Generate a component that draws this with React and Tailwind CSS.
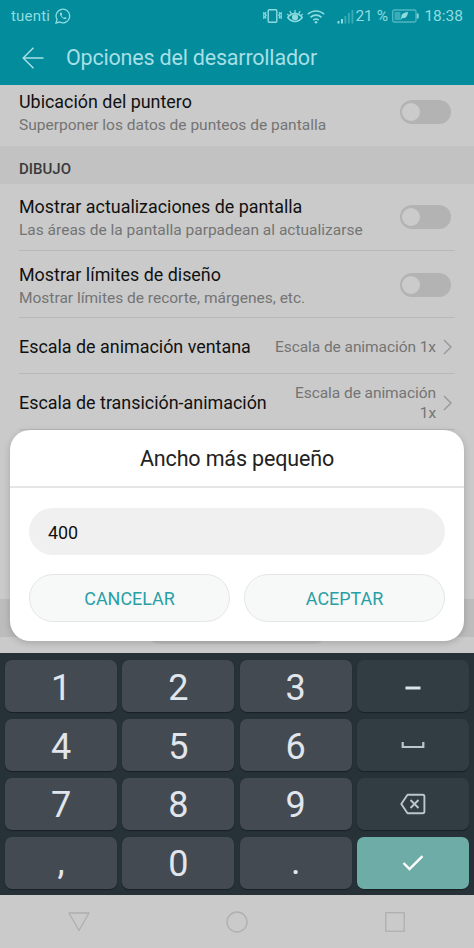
import React, { useState } from "react";

const keys = ["1", "2", "3", "minus", "4", "5", "6", "space", "7", "8", "9", "delete", ",", "0", ".", "ok"];

function StatusBar() {
  return (
    <div className="flex h-[32px] items-center justify-between pl-[11px] pr-[11px] text-[#8fdce0]">
      <div className="flex items-center">
        <span className="text-[15px] leading-[18px] tracking-[0.2px]">tuenti</span>
        <svg className="ml-[5px]" width="16" height="16" viewBox="0 0 16 16" fill="none" stroke="currentColor" strokeWidth="1.3">
          <path d="M1 15l1-3.600A6.800 6.800 0 1 1 4.700 14z" />
          <path d="M5.600 4.400c-1 .6-.9 2 .1 3.500 1.100 1.600 2.500 2.800 3.900 3.200 1.200.3 2-.6 1.900-1.300L9.900 9l-.9.900C7.800 9.300 7 8.400 6.500 7.400l.7-.9-.7-1.900z" fill="currentColor" stroke="none" />
        </svg>
      </div>
      <div className="flex items-center">
        <svg width="19" height="16" viewBox="0 0 19 16" fill="none" stroke="currentColor" strokeWidth="1.400">
          <rect x="5.200" y="1.700" width="8.600" height="12.600" rx="1" />
          <path d="M3.200 4l-1.200 1.500 1.200 1.700L2 8.900l1.200 1.600M.8 4v7M15.800 4L17 5.500l-1.200 1.700L17 8.900l-1.200 1.600M18.200 4v7" strokeWidth="1.200" />
        </svg>
        <svg className="ml-[5px]" width="16" height="16" viewBox="0 0 16 16" fill="none" stroke="currentColor" strokeWidth="1.500">
          <path d="M.8 9.500C3 6.700 5.300 5.600 8 5.600s5 1.100 7.200 3.900C13 12.300 10.700 13.500 8 13.500S3 12.300.8 9.500z" />
          <circle cx="8" cy="9.300" r="2.300" fill="currentColor" />
          <path d="M8 5V2M4.300 5.600L2.800 3.100M11.700 5.600l1.500-2.500M1.800 7.700L.4 6M14.200 7.700L15.600 6" strokeWidth="1.200" />
        </svg>
        <svg className="ml-[4px]" width="18" height="15" viewBox="0 0 18 15" fill="none" stroke="currentColor" strokeWidth="1.600">
          <path d="M.8 5.300a11.700 11.700 0 0 1 16.400 0M3.500 8.300a8 8 0 0 1 11 0M6.300 11.100a4.200 4.200 0 0 1 5.400 0" />
          <circle cx="9" cy="13.300" r="1.300" fill="currentColor" stroke="none" />
        </svg>
        <svg className="ml-[12px]" width="17" height="15" viewBox="0 0 17 15" fill="currentColor">
          <rect x="0.500" y="12" width="2" height="2.500" />
          <rect x="4" y="10" width="2" height="4.500" />
          <g opacity="0.4">
            <rect x="7.500" y="7" width="1.800" height="7.500" />
            <rect x="11" y="4" width="1.800" height="10.500" />
            <rect x="14.500" y="1" width="1.800" height="13.500" />
          </g>
        </svg>
        <span className="ml-px w-[33px] whitespace-nowrap text-[15.500px] leading-[18px]">21 %</span>
        <svg className="ml-[4px]" width="27" height="14" viewBox="0 0 27 14" fill="none" stroke="currentColor">
          <rect x="0.700" y="1" width="23.300" height="12" rx="1.500" opacity="0.550" strokeWidth="1.300" />
          <rect x="2.500" y="3" width="6" height="8" fill="currentColor" stroke="none" opacity="0.400" />
          <path d="M25.700 4.500v5" strokeWidth="1.800" />
          <path d="M16 3c-4 .3-7 2-6.500 5l-1.200 2.500 1-.2L10.500 9c3 .8 5.300-2 5.500-6z" fill="currentColor" stroke="none" />
        </svg>
        <span className="ml-[5px] text-[15.500px] leading-[18px]">18:38</span>
      </div>
    </div>
  );
}

function Header() {
  return (
    <header className="h-[85px] shrink-0 bg-[#028c9c]">
      <StatusBar />
      <div className="flex h-[51px] items-center pl-[22px] text-[#a6dfe5]">
        <svg width="22" height="22" viewBox="0 0 22 22" fill="none" stroke="currentColor" strokeWidth="1.500">
          <path d="M21.500 11H1.300M11.500.7L1.200 11l10.300 10.300" />
        </svg>
        <h1 className="ml-[22px] pt-px text-[21.500px] leading-[26px] tracking-[-0.200px]">Opciones del desarrollador</h1>
      </div>
    </header>
  );
}

function Toggle() {
  const [on, setOn] = useState(false);
  return (
    <button
      onClick={() => setOn(!on)}
      className={"flex h-[24px] w-[51px] shrink-0 items-center rounded-full bg-[#b3b3b3] px-[2px] " + (on ? "justify-end" : "justify-start")}
    >
      <span className="h-[18px] w-[18px] rounded-full bg-[#cbcbcb]" />
    </button>
  );
}

function ToggleRow({ title, text }) {
  return (
    <div className="flex h-full items-center justify-between pr-[4px]">
      <div className="whitespace-nowrap pt-[2px]">
        <p className="text-[17.900px] leading-[24px] text-[#111]">{title}</p>
        <p className="text-[15.500px] leading-[22px] text-[#747474]">{text}</p>
      </div>
      <Toggle />
    </div>
  );
}

function ValueRow({ title, children }) {
  return (
    <div className="flex h-full items-center pt-[2px]">
      <p className="whitespace-nowrap pt-px text-[17.900px] leading-[24px] text-[#111]">{title}</p>
      <p className="ml-auto whitespace-nowrap text-right text-[15.500px] leading-[20px] tracking-[-0.070px] text-[#747474]">{children}</p>
      <svg className="ml-[7px] mr-[3px]" width="9" height="16" viewBox="0 0 9 16" fill="none" stroke="#9b9b9b" strokeWidth="1.500">
        <path d="M1 1l7 7-7 7" />
      </svg>
    </div>
  );
}

function Settings() {
  return (
    <main className="h-[568px] shrink-0 overflow-hidden bg-[#cacaca]">
      <div className="h-[61px] pl-[19px] pr-[19px] pb-[7px]">
        <ToggleRow title="Ubicación del puntero" text="Superponer los datos de punteos de pantalla" />
      </div>
      <div className="flex h-[38px] items-center bg-[#c2c2c2] pl-[19px] pt-[9px]">
        <h2 className="text-[15px] font-medium text-[#3a3a3a]">DIBUJO</h2>
      </div>
      <div className="mx-[19px] h-[67px] border-b border-[#b8b8b8]">
        <ToggleRow title="Mostrar actualizaciones de pantalla" text="Las áreas de la pantalla parpadean al actualizarse" />
      </div>
      <div className="mx-[19px] h-[67px] border-b border-[#b8b8b8] pt-[2px]">
        <ToggleRow title="Mostrar límites de diseño" text="Mostrar límites de recorte, márgenes, etc." />
      </div>
      <div className="mx-[19px] h-[56px] border-b border-[#b8b8b8]">
        <ValueRow title="Escala de animación ventana">Escala de animación 1x</ValueRow>
      </div>
      <div className="mx-[19px] h-[56px] border-b border-[#b8b8b8]">
        <ValueRow title="Escala de transición-animación">
          Escala de animación
          <br />
          1x
        </ValueRow>
      </div>
      <div className="h-[169px]" />
      <div className="h-[38px] bg-[#bcbcbc]" />
    </main>
  );
}

function Dialog() {
  const [value, setValue] = useState("400");
  return (
    <div className="absolute left-[10px] top-[430px] h-[211px] w-[454px] rounded-[20px] bg-white shadow-[0_2px_7px_rgba(0,0,0,0.18)]">
      <h2 className="flex h-[58px] items-center justify-center border-b-2 border-[#e5e5e5] pt-[3px] text-[21.500px] tracking-[-0.150px] text-[#222]">
        Ancho más pequeño
      </h2>
      <div className="px-[19px] pt-[20px]">
        <input
          value={value}
          onChange={(e) => setValue(e.target.value)}
          className="block h-[47px] w-full rounded-full bg-[#f0f0f0] px-[19px] pt-px text-[17.900px] text-[#111] outline-none"
        />
        <div className="mt-[19px] grid grid-cols-2 gap-[14px] text-[17.900px] text-[#27a0a5]">
          <button className="h-[48px] rounded-full border border-[#e6e6e6] bg-[#f7f8f8] pt-[3px]">CANCELAR</button>
          <button className="h-[48px] rounded-full border border-[#e6e6e6] bg-[#f7f8f8] pt-[3px]">ACEPTAR</button>
        </div>
      </div>
    </div>
  );
}

function KeyFace({ name }) {
  if (name === "minus") {
    return (
      <svg className="mt-[3px]" width="16" height="4" viewBox="0 0 16 4">
        <path d="M.5 2h15" stroke="#dce4e8" strokeWidth="3" />
      </svg>
    );
  }
  if (name === "space") {
    return (
      <svg width="24" height="8" viewBox="0 0 24 8" fill="none" stroke="#bdc6ca" strokeWidth="2.200">
        <path d="M1.700 1v5h20.600V1" />
      </svg>
    );
  }
  if (name === "delete") {
    return (
      <svg width="26" height="22" viewBox="0 0 26 22" fill="none" stroke="#bdc6ca" strokeWidth="1.900">
        <path d="M7.500 1.800h15.200q1.700 0 1.700 1.700v15q0 1.700-1.700 1.700H7.500L1.300 11z" strokeLinejoin="round" />
        <path d="M10.500 7l8 8M18.500 7l-8 8" />
      </svg>
    );
  }
  if (name === "ok") {
    return (
      <svg width="22" height="16" viewBox="0 0 22 16" fill="none" stroke="#fff" strokeWidth="2.400">
        <path d="M1.500 8l6 6L20.500 1.200" />
      </svg>
    );
  }
  if (name === "," || name === ".") {
    return <span className="pb-px text-[36px] leading-[40px]">{name}</span>;
  }
  return <span className="pt-[3px] text-[36px] leading-[40px]">{name}</span>;
}

function Keyboard() {
  return (
    <div className="grid h-[242px] shrink-0 grid-cols-4 grid-rows-4 gap-x-[5.300px] gap-y-[6.400px] bg-[#273138] px-[5px] pb-[6px] pt-[7px]">
      {keys.map((key, i) => (
        <button
          key={key}
          className={
            "flex items-center justify-center rounded-[7px] text-[#e1e5ec] shadow-[0_1px_1px_rgba(0,0,0,0.35)] " +
            (key === "ok" ? "bg-[#6eaca8]" : i % 4 === 3 ? "bg-[#323d43]" : "bg-[#444a52]")
          }
        >
          <KeyFace name={key} />
        </button>
      ))}
    </div>
  );
}

function NavBar() {
  return (
    <nav className="flex h-[53px] shrink-0 items-center justify-between bg-[#cacaca] pl-[68px] pr-[68px] text-[#afafaf]">
      <svg width="22" height="20" viewBox="0 0 22 20" fill="none" stroke="currentColor" strokeWidth="1.300">
        <path d="M1 1h20L11 18.500z" strokeLinejoin="round" />
      </svg>
      <svg width="22" height="22" viewBox="0 0 22 22" fill="none" stroke="currentColor" strokeWidth="1.300">
        <circle cx="11" cy="11" r="10" />
      </svg>
      <svg width="22" height="22" viewBox="0 0 22 22" fill="none" stroke="currentColor" strokeWidth="1.300">
        <rect x="1.700" y="1.700" width="18.500" height="18.500" />
      </svg>
    </nav>
  );
}

export default function App() {
  return (
    <div className="relative flex h-[948px] w-[474px] flex-col overflow-hidden font-[Roboto,sans-serif]">
      <Header />
      <Settings />
      {/* bottom edge of the pill that peeks out under the dialog */}
      <div className="absolute left-[144px] top-[610px] h-[34px] w-[186px] rounded-full bg-[#bdbdbd]" />
      <Dialog />
      <Keyboard />
      <NavBar />
    </div>
  );
}
